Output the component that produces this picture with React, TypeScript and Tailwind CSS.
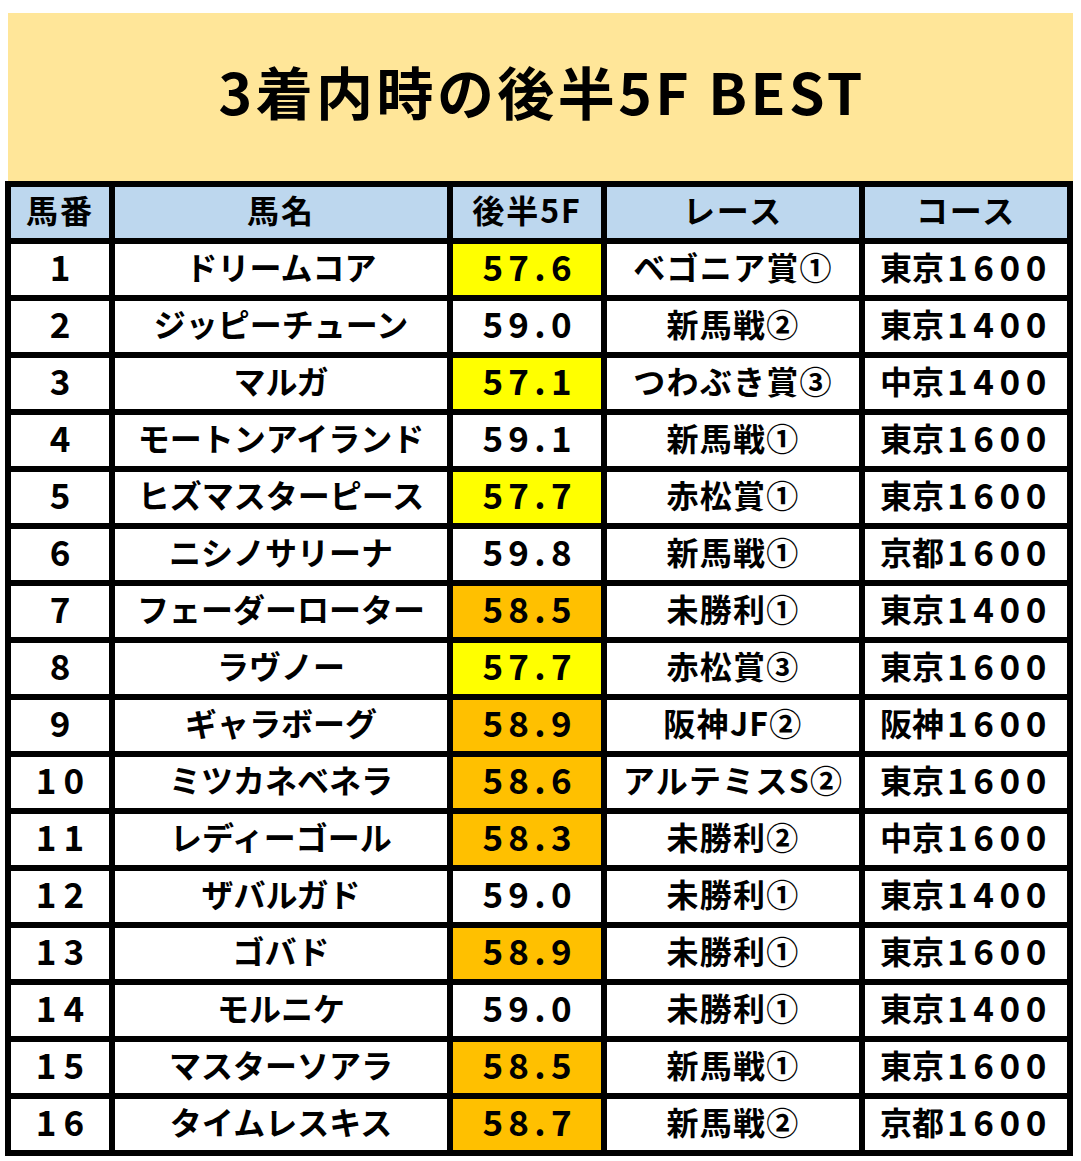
type Row = {
  no: number;
  name: string;
  time: string;
  mark: "y" | "o" | "";
  race: string;
  place: string;
  dist: string;
};

const rows: Row[] = [
  { no: 1, name: "ドリームコア", time: "57.6", mark: "y", race: "ベゴニア賞①", place: "東京", dist: "1600" },
  { no: 2, name: "ジッピーチューン", time: "59.0", mark: "", race: "新馬戦②", place: "東京", dist: "1400" },
  { no: 3, name: "マルガ", time: "57.1", mark: "y", race: "つわぶき賞③", place: "中京", dist: "1400" },
  { no: 4, name: "モートンアイランド", time: "59.1", mark: "", race: "新馬戦①", place: "東京", dist: "1600" },
  { no: 5, name: "ヒズマスターピース", time: "57.7", mark: "y", race: "赤松賞①", place: "東京", dist: "1600" },
  { no: 6, name: "ニシノサリーナ", time: "59.8", mark: "", race: "新馬戦①", place: "京都", dist: "1600" },
  { no: 7, name: "フェーダーローター", time: "58.5", mark: "o", race: "未勝利①", place: "東京", dist: "1400" },
  { no: 8, name: "ラヴノー", time: "57.7", mark: "y", race: "赤松賞③", place: "東京", dist: "1600" },
  { no: 9, name: "ギャラボーグ", time: "58.9", mark: "o", race: "阪神JF②", place: "阪神", dist: "1600" },
  { no: 10, name: "ミツカネベネラ", time: "58.6", mark: "o", race: "アルテミスS②", place: "東京", dist: "1600" },
  { no: 11, name: "レディーゴール", time: "58.3", mark: "o", race: "未勝利②", place: "中京", dist: "1600" },
  { no: 12, name: "ザバルガド", time: "59.0", mark: "", race: "未勝利①", place: "東京", dist: "1400" },
  { no: 13, name: "ゴバド", time: "58.9", mark: "o", race: "未勝利①", place: "東京", dist: "1600" },
  { no: 14, name: "モルニケ", time: "59.0", mark: "", race: "未勝利①", place: "東京", dist: "1400" },
  { no: 15, name: "マスターソアラ", time: "58.5", mark: "o", race: "新馬戦①", place: "東京", dist: "1600" },
  { no: 16, name: "タイムレスキス", time: "58.7", mark: "o", race: "新馬戦②", place: "京都", dist: "1600" },
];

const headers = ["馬番", "馬名", "後半5F", "レース", "コース"];

// text in Noto CJK sits low in its box, pb nudges it up to match
const cell = "flex items-center justify-center h-[51px] pb-[8px] leading-none whitespace-nowrap";

export default function App() {
  return (
    <div
      className="w-[1081px] h-[1161px] bg-white pt-[13px] text-black font-bold"
      style={{ fontFamily: '"Noto Sans CJK JP", "Noto Sans", sans-serif' }}
    >
      <div className="mx-[8px] h-[168px] pb-[14px] bg-[#ffe699] flex items-center justify-center">
        <h1 className="text-[57px] leading-none tracking-[0.06em] pl-[0.06em]">3着内時の後半5F BEST</h1>
      </div>

      <div className="ml-[5px] w-[1068px] bg-black p-[6px] grid grid-cols-[98px_332px_148px_252px_202px] gap-[6px] text-[32px]">
        {headers.map((h) => (
          <div key={h} className={`${cell} h-[50px] bg-[#bdd7ee] tracking-[0.06em]`}>
            {h}
          </div>
        ))}
        {rows.map((r) => (
          <div key={r.no} className="contents">
            <div className={`${cell} bg-white text-[35px] tracking-[0.2em] pl-[0.2em]`}>{r.no}</div>
            <div className={`${cell} bg-white`}>{r.name}</div>
            <div
              className={`${cell} text-[35px] tracking-[0.15em] pl-[0.15em] ${
                r.mark === "y" ? "bg-[#ffff00]" : r.mark === "o" ? "bg-[#ffc000]" : "bg-white"
              }`}
            >
              {r.time}
            </div>
            <div className={`${cell} bg-white tracking-[0.04em]`}>{r.race}</div>
            <div className={`${cell} bg-white`}>
              {r.place}
              <span className="text-[35px] tracking-[0.16em] ml-[0.08em]">{r.dist}</span>
            </div>
          </div>
        ))}
      </div>
    </div>
  );
}
